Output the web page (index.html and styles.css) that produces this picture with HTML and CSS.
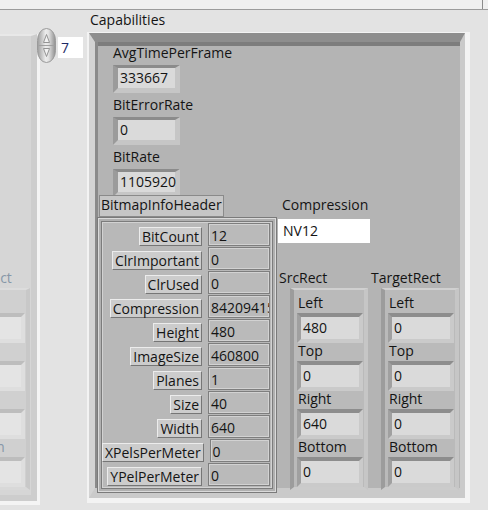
FILE: index.html
```html
<!DOCTYPE html>
<html>
<head>
<meta charset="utf-8">
<link rel="stylesheet" href="styles.css">
</head>
<body>
<div class="topbar"><span class="topbar-tick"></span></div>
<div class="main">
  <div class="ghost">
    <div class="ghost-inner dim">
      <div class="rect-col tgt">
        <div class="lbl rlabel">TargetRect</div>
        <div class="rect">
          <div class="rlbl"></div><div class="rnum"></div>
          <div class="rlbl"></div><div class="rnum"></div>
          <div class="rlbl"></div><div class="rnum"></div>
          <div class="rlbl">Bottom</div><div class="rnum"></div>
        </div>
      </div>
    </div>
  </div>
  <div class="index">
    <div class="spinner">
      <svg width="19" height="35" viewBox="0 0 19 35">
        <defs>
          <linearGradient id="sg" x1="0" x2="1" y1="0" y2="0">
            <stop offset="0" stop-color="#9c9c9c"/>
            <stop offset="0.45" stop-color="#ececec"/>
            <stop offset="0.6" stop-color="#e4e4e4"/>
            <stop offset="1" stop-color="#8e8e8e"/>
          </linearGradient>
        </defs>
        <rect x="0.5" y="0.5" width="18" height="34" rx="9" ry="12" fill="url(#sg)" stroke="#9a9a9a"/>
        <path d="M6.5 14.5 L9.5 6.5 L12.5 14.5 Z" fill="#f2f2f2" stroke="#8a8a8a" stroke-width="0.9"/>
        <path d="M1.5 17.5 H17.5" stroke="#a0a0a0"/>
        <path d="M6.5 20.5 L9.5 28.5 L12.5 20.5 Z" fill="#f2f2f2" stroke="#8a8a8a" stroke-width="0.9"/>
      </svg>
    </div>
    <div class="index-field">7</div>
  </div>
  <div class="cap">
    <div class="cap-label">Capabilities</div>
    <div class="cap-frame">
      <div class="cap-inner">
        <div class="col-left">
          <div class="lbl">AvgTimePerFrame</div>
          <div class="num">333667</div>
          <div class="lbl">BitErrorRate</div>
          <div class="num">0</div>
          <div class="lbl">BitRate</div>
          <div class="num last">1105920</div>
          <div class="bih-label">BitmapInfoHeader</div>
          <div class="bih">
            <div class="bih-row"><span class="bih-name">BitCount</span><span class="bih-val">12</span></div>
            <div class="bih-row"><span class="bih-name">ClrImportant</span><span class="bih-val">0</span></div>
            <div class="bih-row"><span class="bih-name">ClrUsed</span><span class="bih-val">0</span></div>
            <div class="bih-row"><span class="bih-name">Compression</span><span class="bih-val">842094158</span></div>
            <div class="bih-row"><span class="bih-name">Height</span><span class="bih-val">480</span></div>
            <div class="bih-row"><span class="bih-name">ImageSize</span><span class="bih-val">460800</span></div>
            <div class="bih-row"><span class="bih-name">Planes</span><span class="bih-val">1</span></div>
            <div class="bih-row"><span class="bih-name">Size</span><span class="bih-val">40</span></div>
            <div class="bih-row"><span class="bih-name">Width</span><span class="bih-val">640</span></div>
            <div class="bih-row"><span class="bih-name">XPelsPerMeter</span><span class="bih-val">0</span></div>
            <div class="bih-row"><span class="bih-name">YPelPerMeter</span><span class="bih-val">0</span></div>
          </div>
        </div>
        <div class="col-right">
          <div class="lbl comp-label">Compression</div>
          <div class="str">NV12</div>
          <div class="rects">
            <div class="rect-col src">
              <div class="lbl rlabel">SrcRect</div>
              <div class="rect">
                <div class="rlbl">Left</div><div class="rnum">480</div>
                <div class="rlbl">Top</div><div class="rnum">0</div>
                <div class="rlbl">Right</div><div class="rnum">640</div>
                <div class="rlbl">Bottom</div><div class="rnum">0</div>
              </div>
            </div>
            <div class="rect-col tgt">
              <div class="lbl rlabel">TargetRect</div>
              <div class="rect">
                <div class="rlbl">Left</div><div class="rnum">0</div>
                <div class="rlbl">Top</div><div class="rnum">0</div>
                <div class="rlbl">Right</div><div class="rnum">0</div>
                <div class="rlbl">Bottom</div><div class="rnum">0</div>
              </div>
            </div>
          </div>
        </div>
      </div>
    </div>
  </div>
</div>
</body>
</html>
```

FILE: styles.css
```css
* { box-sizing: border-box; }

body {
  margin: 0;
  width: 488px;
  height: 510px;
  overflow: hidden;
  background: #e3e3e3;
  font-family: "Open Sans", "Noto Sans", sans-serif;
  font-size: 14px;
  color: #141414;
}

.topbar {
  height: 10px;
  background: #f0f0f0;
  border-bottom: 1px solid #9c9c9c;
  display: flex;
  justify-content: flex-end;
}
.topbar-tick {
  width: 1px;
  height: 9px;
  background: #8c8c8c;
  margin-right: 5px;
}

.main {
  display: flex;
  align-items: flex-start;
}

/* ghosted previous element */
.ghost {
  width: 40px;
  height: 471px;
  margin-top: 24px;
  border-right: 3px solid #f4f4f4;
  border-bottom: 4px solid #f4f4f4;
  display: flex;
}
.ghost-inner {
  flex: 1;
  min-width: 0;
  background: #d6d6d6;
  border-top: 2px solid #e8e8e8;
  border-right: 6px solid #cdcdcd;
  border-bottom: 6px solid #cdcdcd;
  display: flex;
  justify-content: flex-end;
  align-items: flex-start;
  padding-top: 234px;
  overflow: hidden;
}
.ghost .rlbl { margin-left: -4px; }

/* array index */
.index {
  width: 50px;
  margin-left: -3px;
  display: flex;
  align-items: flex-start;
  flex: none;
}
.spinner {
  margin-top: 18px;
  height: 35px;
}
.spinner svg { display: block; }
.index-field {
  margin-top: 27px;
  margin-left: 2px;
  width: 25px;
  height: 21px;
  background: #ffffff;
  color: #1f2a66;
  padding-left: 3px;
  line-height: 21px;
}

/* capabilities cluster */
.cap {
  width: 383px;
  flex: none;
}
.cap-label {
  height: 22px;
  padding: 2px 0 0 3px;
  line-height: 16px;
}
.cap-frame {
  height: 471px;
  border-style: solid;
  border-color: #f3f3f3;
  border-width: 1px 5px 5px 2px;
}
.cap-inner {
  height: 100%;
  border-style: solid;
  border-width: 9px 5px 10px 6px;
  border-color: #8e8e8e #cacaca #cacaca #d3d3d3;
  background: #b4b4b4;
  box-shadow: inset 3px 0 0 #8a8a8a, inset 0 4px 0 #7d7d7d;
  display: flex;
  align-items: flex-start;
}

.lbl {
  line-height: 16px;
  height: 16px;
  white-space: nowrap;
}

.col-left {
  width: 183px;
  flex: none;
  padding-top: 3px;
  display: flex;
  flex-direction: column;
  align-items: flex-start;
}
.col-left > .lbl {
  margin-left: 18px;
  margin-bottom: 4px;
}
.num {
  margin-left: 18px;
  width: 67px;
  height: 28px;
  border-style: solid;
  border-width: 3px 5px 5px 5px;
  border-color: #8b8b8b #c6c6c6 #c6c6c6 #9b9b9b;
  background: #dadada;
  padding-left: 2px;
  line-height: 20px;
  margin-bottom: 4px;
}
.num.last { margin-bottom: -2px; }

.bih-label {
  margin-left: 4px;
  height: 22px;
  padding: 0 1px;
  border: 1px solid #8a8a8a;
  background: #c6c6c6;
  line-height: 18px;
  white-space: nowrap;
  position: relative;
  z-index: 1;
}
.bih {
  margin-left: 2px;
  width: 180px;
  height: 276px;
  border: 1px solid #7a7a7a;
  box-shadow: inset 0 0 0 1px #dadada, inset 0 0 0 3px #b0b0b0, inset 0 0 0 4px #7c7c7c, inset 0 0 0 5px #d2d2d2;
  padding: 5px 5px 0 4px;
  background: #b8b8b8;
}
.bih-row {
  height: 24px;
  display: flex;
  justify-content: flex-end;
  align-items: flex-start;
  gap: 6px;
  padding-right: 1px;
}
.bih-name {
  margin-top: 4px;
  height: 19px;
  padding: 0 2px;
  border: 1px solid;
  border-color: #ececec #767676 #767676 #ececec;
  background: #cccccc;
  line-height: 17px;
  white-space: nowrap;
}
.bih-val {
  width: 62px;
  height: 23px;
  border: 1px solid #7e7e7e;
  box-shadow: inset 0 0 0 1px #d2d2d2;
  background: #bababa;
  padding: 2px 0 0 2px;
  line-height: 19px;
  white-space: nowrap;
  overflow: hidden;
}

.col-right {
  width: 182px;
  flex: none;
  padding-top: 155px;
}
.comp-label {
  padding-left: 4px;
  margin-bottom: 6px;
}
.str {
  width: 92px;
  height: 24px;
  background: #ffffff;
  padding-left: 5px;
  line-height: 24px;
}
.rects {
  display: flex;
  margin-top: 27px;
}
.rect-col { flex: none; }
.rect-col.src { width: 92px; }
.rect-col.tgt { width: 90px; }
.rlabel { padding-left: 1px; }
.rect {
  margin-top: 2px;
  width: 78px;
  height: 202px;
  background: #bababa;
  border-style: solid;
  border-width: 2px 4px 3px 4px;
  border-color: #d0d0d0 #c6c6c6 #cbcbcb #9c9c9c;
  padding: 5px 1px 0 3px;
}
.src .rect { margin-left: 12px; }
.tgt .rect { margin-left: 11px; }
.rlbl {
  height: 15px;
  line-height: 15px;
  padding-left: 1px;
  margin-bottom: 3px;
  white-space: nowrap;
}
.rnum {
  height: 30px;
  border-style: solid;
  border-width: 4px;
  border-color: #8d8d8d #cacaca #cacaca #a0a0a0;
  background: #dadada;
  padding-left: 2px;
  line-height: 22px;
}

/* dimmed (non-current element) */
.dim .lbl,
.dim .rlbl { color: #8797a8; }
.dim .rnum {
  border-color: #bdbdbd #dedede #dedede #c4c4c4;
  background: #e4e4e4;
}
.dim .rect {
  background: #d0d0d0;
  border-color: #dcdcdc #c8c8c8 #d8d8d8 #c6c6c6;
}
```
